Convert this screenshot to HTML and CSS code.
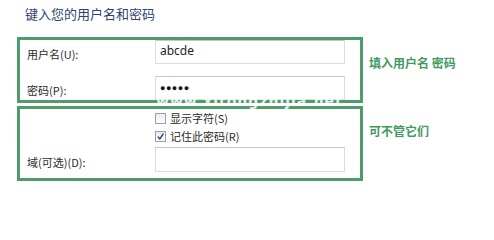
FILE: index.html
```html
<!DOCTYPE html>
<html lang="zh-CN">
<head>
<meta charset="utf-8">
<link rel="stylesheet" href="styles.css">
</head>
<body>
<div class="page">
  <h1 class="title">键入您的用户名和密码</h1>
  <div class="group">
    <div class="box box-top">
      <div class="row">
        <span class="label">用户名(U):</span>
        <div class="field">abcde</div>
      </div>
      <div class="row">
        <span class="label">密码(P):</span>
        <div class="field dots">●●●●●</div>
      </div>
    </div>
    <div class="note note-top">填入用户名 密码</div>
  </div>
  <div class="group">
    <div class="box box-bottom">
      <div class="check-row">
        <span class="cb"></span><span class="cb-label">显示字符(S)</span>
      </div>
      <div class="check-row">
        <span class="cb checked"><svg viewBox="0 0 9 9" width="9" height="9"><path d="M1.8 4.6 L3.8 6.8 L7.4 1.6" fill="none" stroke="#2b3b6b" stroke-width="1.4"/></svg></span><span class="cb-label">记住此密码(R)</span>
      </div>
      <div class="row domain">
        <span class="label">域(可选)(D):</span>
        <div class="field"></div>
      </div>
    </div>
    <div class="note note-bottom">可不管它们</div>
  </div>
  <div class="watermark" aria-hidden="true">www.xitongzhijia.net</div>
</div>
</body>
</html>
```

FILE: styles.css
```css
html, body {
  margin: 0;
  padding: 0;
  background: #ffffff;
}
body {
  font-family: "Noto Sans CJK SC", "Noto Sans", "Liberation Sans", sans-serif;
  font-size: 11px;
  color: #2a2a2a;
}
.page {
  position: relative;
  width: 494px;
  height: 207px;
  overflow: hidden;
}
.title {
  margin: 0;
  padding: 5px 0 0 25px;
  height: 37px;
  box-sizing: border-box;
  font-size: 13px;
  font-weight: normal;
  line-height: 18px;
  color: #2c4470;
}
.group {
  display: flex;
  align-items: flex-start;
}
.box {
  margin-left: 17px;
  width: 346px;
  box-sizing: border-box;
  border: 3px solid #4e9c69;
}
.box-top {
  height: 66px;
  padding: 0 15px 0 7px;
  display: flex;
  flex-direction: column;
  gap: 12px;
}
.box-bottom {
  margin-top: 3px;
  height: 75px;
  padding: 2px 15px 0 5px;
  display: flex;
  flex-direction: column;
}
.row {
  display: flex;
  align-items: center;
  height: 24px;
}
.label {
  width: 128px;
  flex: none;
  line-height: 16px;
  padding-top: 4px;
}
.field {
  width: 190px;
  height: 24px;
  box-sizing: border-box;
  border: 1px solid #dadcdf;
  border-top-color: #c3c6ca;
  background: #fff;
  padding: 1px 0 0 4px;
  font-size: 12px;
  line-height: 18px;
  color: #1e1e1e;
  font-family: "Noto Sans", "Liberation Sans", sans-serif;
}
.dots {
  font-size: 9px;
  letter-spacing: 0.5px;
  line-height: 18px;
  padding-top: 2px;
  color: #111;
}
.check-row {
  display: flex;
  align-items: center;
  height: 14px;
  padding-left: 130px;
  margin-bottom: 4px;
}
.cb {
  width: 9px;
  height: 9px;
  border: 1px solid #9aa1aa;
  background: linear-gradient(#e9ecef, #fdfdfd);
  display: flex;
  align-items: center;
  justify-content: center;
  flex: none;
}
.cb svg { display: block; }
.cb-label {
  margin-left: 4px;
  line-height: 14px;
}
.domain {
  margin-top: 0;
  padding-left: 2px;
  height: 25px;
}
.domain .field {
  height: 25px;
}
.note {
  margin-left: 6px;
  font-size: 12px;
  font-weight: bold;
  color: #3f9a5e;
  line-height: 16px;
}
.note-top {
  margin-top: 18px;
}
.note-bottom {
  margin-top: 20px;
}
.watermark {
  position: absolute;
  left: 156px;
  top: 96px;
  width: 190px;
  font-family: "DejaVu Sans", sans-serif;
  font-size: 14px;
  font-weight: bold;
  letter-spacing: 1px;
  color: #ffffff;
  line-height: 11px;
  height: 11px;
  white-space: nowrap;
  opacity: 0.85;
}
```
